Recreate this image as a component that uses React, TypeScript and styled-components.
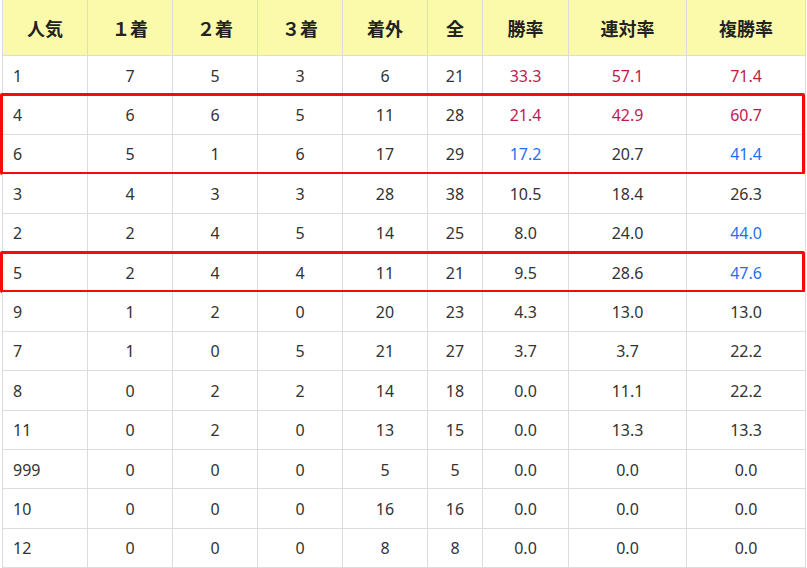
import React from 'react';
import styled, { createGlobalStyle } from 'styled-components';

type Tone = 'red' | 'blue' | undefined;

interface RowData {
    cells: (string | number)[];
    tones?: Tone[];
}

interface Group {
    marked: boolean;
    rows: RowData[];
}

const GlobalStyle = createGlobalStyle`
    html, body {
        margin: 0;
        padding: 0;
        background: #fff;
        overflow: hidden;
    }
    body {
        font-family: "Noto Sans", "Noto Sans CJK JP", sans-serif;
        color: #333;
    }
`;

const headers = ['人気', '１着', '２着', '３着', '着外', '全', '勝率', '連対率', '複勝率'];

const R: Tone = 'red';
const B: Tone = 'blue';

const groups: Group[] = [
    { marked: false, rows: [{ cells: [1, 7, 5, 3, 6, 21, '33.3', '57.1', '71.4'], tones: [, , , , , , R, R, R] as Tone[] }] },
    {
        marked: true,
        rows: [
            { cells: [4, 6, 6, 5, 11, 28, '21.4', '42.9', '60.7'], tones: [, , , , , , R, R, R] as Tone[] },
            { cells: [6, 5, 1, 6, 17, 29, '17.2', '20.7', '41.4'], tones: [, , , , , , B, , B] as Tone[] },
        ],
    },
    {
        marked: false,
        rows: [
            { cells: [3, 4, 3, 3, 28, 38, '10.5', '18.4', '26.3'] },
            { cells: [2, 2, 4, 5, 14, 25, '8.0', '24.0', '44.0'], tones: [, , , , , , , , B] as Tone[] },
        ],
    },
    { marked: true, rows: [{ cells: [5, 2, 4, 4, 11, 21, '9.5', '28.6', '47.6'], tones: [, , , , , , , , B] as Tone[] }] },
    {
        marked: false,
        rows: [
            { cells: [9, 1, 2, 0, 20, 23, '4.3', '13.0', '13.0'] },
            { cells: [7, 1, 0, 5, 21, 27, '3.7', '3.7', '22.2'] },
            { cells: [8, 0, 2, 2, 14, 18, '0.0', '11.1', '22.2'] },
            { cells: [11, 0, 2, 0, 13, 15, '0.0', '13.3', '13.3'] },
            { cells: [999, 0, 0, 0, 5, 5, '0.0', '0.0', '0.0'] },
            { cells: [10, 0, 0, 0, 16, 16, '0.0', '0.0', '0.0'] },
            { cells: [12, 0, 0, 0, 8, 8, '0.0', '0.0', '0.0'] },
        ],
    },
];

const toneColor = (tone: Tone) => {
    if (tone === 'red') return '#c2174f';
    if (tone === 'blue') return '#1f6ff2';
    return '#333';
};

const Table = styled.div`
    margin: 0 0 0 2px;
    width: 804px;
    border-right: 1px solid #dcdce0;
    box-sizing: border-box;
`;

const Row = styled.div<{ $head?: boolean }>`
    display: grid;
    grid-template-columns: 85px 85px 85px 85px 85px 55px 86px 118px 1fr;
    height: ${({ $head }) => ($head ? '56px' : '39.4px')};
    box-sizing: border-box;
    border-bottom: 1px solid #dcdce0;
    background: ${({ $head }) => ($head ? '#fafaaa' : '#fff')};
`;

const Cell = styled.div<{ $left?: boolean; $head?: boolean; $tone?: Tone }>`
    display: flex;
    align-items: center;
    justify-content: ${({ $left }) => ($left ? 'flex-start' : 'center')};
    padding: ${({ $left }) => ($left ? '1px 0 0 10px' : '1px 0 0')};
    border-left: 1px solid #dcdce0;
    font-size: ${({ $head }) => ($head ? '18px' : '16px')};
    font-weight: ${({ $head }) => ($head ? 700 : 400)};
    color: ${({ $head, $tone }) => ($head ? '#222' : toneColor($tone))};
    white-space: nowrap;
`;

const Band = styled.div<{ $marked: boolean }>`
    position: relative;

    &::after {
        content: '';
        display: ${({ $marked }) => ($marked ? 'block' : 'none')};
        position: absolute;
        left: -2px;
        right: 0;
        top: -2px;
        bottom: -1px;
        border: 3px solid #f40b0b;
        border-radius: 2px;
        pointer-events: none;
    }
`;

const App: React.FC = () => (
    <>
        <GlobalStyle />
        <Table>
            <Row $head>
                {headers.map(h => (
                    <Cell key={h} $head>{h}</Cell>
                ))}
            </Row>
            {groups.map((group, gi) => (
                <Band key={gi} $marked={group.marked}>
                    {group.rows.map(row => (
                        <Row key={String(row.cells[0])}>
                            {row.cells.map((value, ci) => (
                                <Cell key={ci} $left={ci === 0} $tone={row.tones ? row.tones[ci] : undefined}>
                                    {value}
                                </Cell>
                            ))}
                        </Row>
                    ))}
                </Band>
            ))}
        </Table>
    </>
);

export default App;
